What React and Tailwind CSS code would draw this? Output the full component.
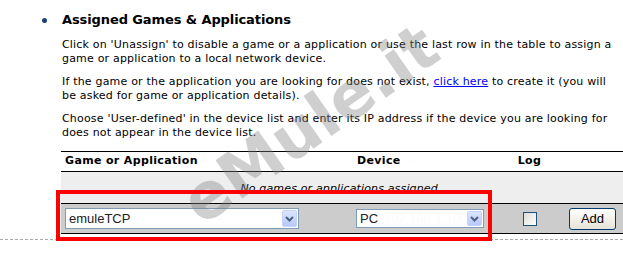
import React from "react";

function Chevron() {
  return (
    <svg width="9" height="6" viewBox="0 0 9 6">
      <polyline points="1,1 4.5,4.5 8,1" fill="none" stroke="#4d6185" strokeWidth="2" />
    </svg>
  );
}

function FakeSelect({ value, className, children }) {
  return (
    <div className={"flex items-center bg-white border border-[#7f9db9] " + className}>
      <span className="flex-1 pl-[3px] text-[13px] leading-none text-[#222] font-['Liberation_Sans',Arial,sans-serif] whitespace-nowrap overflow-hidden">
        {value}
        {children}
      </span>
      <span className="mr-px w-[15px] h-[calc(100%-2px)] flex items-center justify-center rounded-[2px] border border-[#c3d3fd] bg-gradient-to-b from-[#dbe6fd] to-[#b6c9f7]">
        <Chevron />
      </span>
    </div>
  );
}

export default function App() {
  return (
    <div className="relative w-[623px] h-[271px] overflow-hidden bg-white text-black font-['DejaVu_Sans',Verdana,sans-serif] text-[11px]">
      <div className="pl-[62px] pt-[12px]">
        <div className="relative">
          <span className="absolute -left-[20px] top-[6px] w-[5px] h-[5px] rounded-full bg-[#1d3f78]" />
          <h2 className="text-[13px] font-bold leading-[16px] whitespace-nowrap tracking-[-0.1px]">Assigned Games &amp; Applications</h2>
        </div>
        <div className="mt-[10px] leading-[14px] whitespace-nowrap tracking-[0.19px]">
          <p>
            Click on 'Unassign' to disable a game or a application or use the last row in the table to assign a
            <br />
            game or application to a local network device.
          </p>
          <p className="mt-[9px]">
            If the game or the application you are looking for does not exist,{" "}
            <a href="#" className="text-[#0000ff] underline">click here</a> to create it (you will
            <br />
            be asked for game or application details).
          </p>
          <p className="mt-[9px]">
            Choose 'User-defined' in the device list and enter its IP address if the device you are looking for
            <br />
            does not appear in the device list.
          </p>
        </div>
        <div className="-ml-px mt-[11px] border-t border-black">
          <div className="flex h-[20px] items-center font-bold border-b border-black tracking-[0.35px]">
            <div className="w-[292px] pl-[4px]">Game or Application</div>
            <div className="w-[137px] pl-[4px]">Device</div>
            <div className="w-[79px] text-center">Log</div>
            <div className="flex-1" />
          </div>
          <div className="flex h-[32px] items-center justify-center bg-[#eeeeee] border-b border-black italic pr-[2px] pt-[3px] tracking-[0.15px]">
            No games or applications assigned.
          </div>
          <div className="flex h-[30px] items-center bg-[#cccccc] border-b border-black">
            <div className="w-[292px] pl-[4px]">
              <FakeSelect value="emuleTCP" className="w-[234px] h-[21px]" />
            </div>
            <div className="w-[137px] pl-[3px]">
              <FakeSelect value="PC" className="w-[128px] h-[19px]">
                <span className="ml-[6px] text-[#fbfbfb]">192.168.1.100</span>
              </FakeSelect>
            </div>
            <div className="w-[79px] flex justify-center">
              <span className="block w-[14px] h-[14px] border border-[#1c5180] bg-gradient-to-br from-[#dcdcd7] to-white" />
            </div>
            <div className="flex-1">
              <button className="w-[47px] h-[22px] rounded-[3px] border border-[#003c74] bg-gradient-to-b from-white to-[#e6e4d8] text-[13px] leading-none font-['Liberation_Sans',Arial,sans-serif] text-black">
                Add
              </button>
            </div>
          </div>
        </div>
      </div>
      <div className="mt-[5px] border-t border-dashed border-[#aaaaaa]" />

      <div className="pointer-events-none absolute left-[310px] top-[124px] -translate-x-1/2 -translate-y-1/2 -rotate-[35deg] whitespace-nowrap text-[64px] font-bold leading-none text-[rgba(128,128,128,0.38)]">
        eMule.it
      </div>

      <div className="pointer-events-none absolute left-[56px] top-[190px] w-[436px] h-[51px] border-4 border-[#ff0000] shadow-[0_2px_0_#fff]" />
    </div>
  );
}
